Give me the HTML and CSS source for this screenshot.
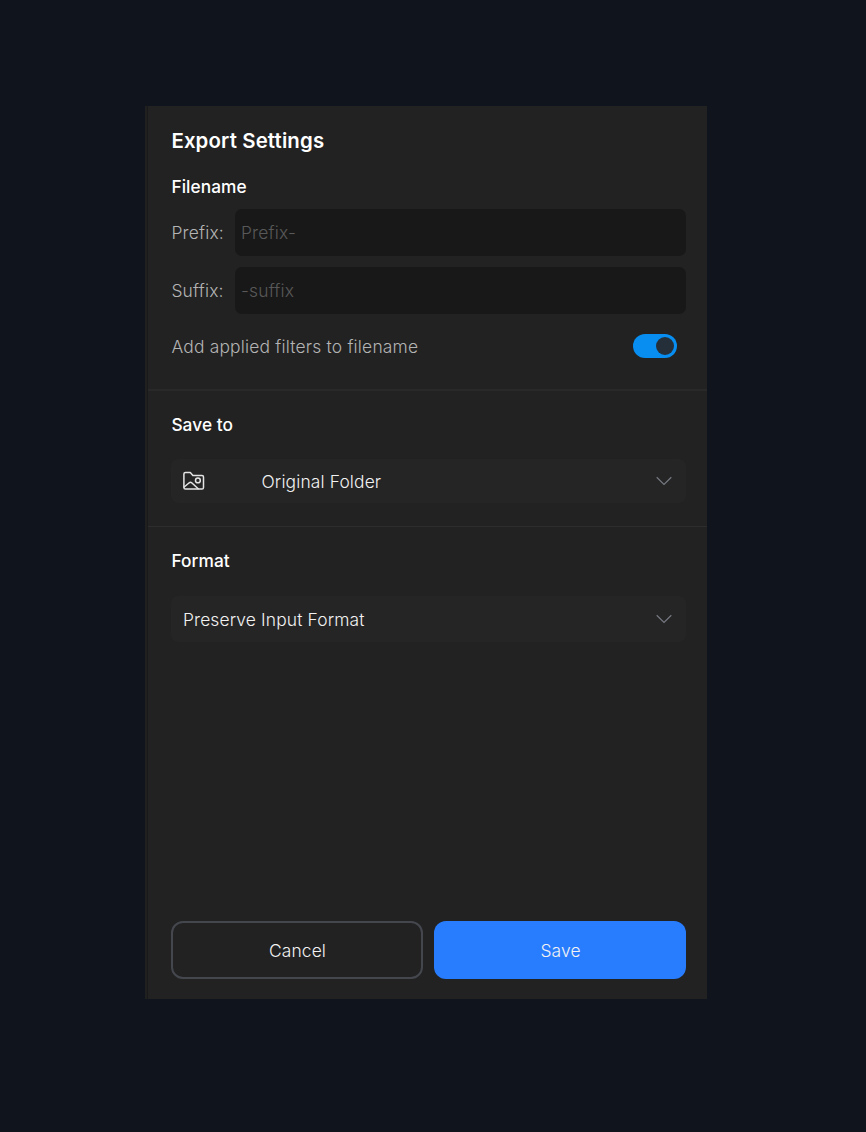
FILE: index.html
```html
<!DOCTYPE html>
<html lang="en">
<head>
<meta charset="utf-8">
<title>Export Settings</title>
<link rel="stylesheet" href="styles.css">
</head>
<body>
<main class="panel">
  <section class="section filename">
    <h1 class="title">Export Settings</h1>
    <h2 class="heading">Filename</h2>
    <div class="fields">
      <label class="field"><span class="label">Prefix:</span><input class="input" type="text" placeholder="Prefix-"></label>
      <label class="field"><span class="label">Suffix:</span><input class="input" type="text" placeholder="-suffix"></label>
    </div>
    <div class="option">
      <span class="option-text">Add applied filters to filename</span>
      <span class="toggle"><span class="knob"></span></span>
    </div>
  </section>
  <section class="section save-to">
    <h2 class="heading">Save to</h2>
    <div class="select folder">
      <svg class="folder-icon" width="22" height="20" viewBox="0 0 22 20" fill="none" stroke="currentColor" stroke-width="1.5" stroke-linejoin="round" stroke-linecap="round">
        <path d="M.9 16.4V3.1Q.9 1.5 2.5 1.5H7.3L9.9 4.4H19Q20.5 4.4 20.5 5.9V16.4Q20.5 18 19 18H2.5Q.9 18 .9 16.4Z"/>
        <path d="M1.2 16 6.2 11.8Q7.5 10.8 8.7 11.8L15.2 17.8"/>
        <circle cx="14.9" cy="9.4" r="2.4"/>
      </svg>
      <span class="value">Original Folder</span>
      <svg class="chevron" width="16" height="10" viewBox="0 0 16 10" fill="none" stroke="currentColor" stroke-width="1.2"><path d="M.7 1.2 8 8.4 15.3 1.2"/></svg>
    </div>
  </section>
  <section class="section format">
    <h2 class="heading">Format</h2>
    <div class="select preserve">
      <span class="value">Preserve Input Format</span>
      <svg class="chevron" width="16" height="10" viewBox="0 0 16 10" fill="none" stroke="currentColor" stroke-width="1.2"><path d="M.7 1.2 8 8.4 15.3 1.2"/></svg>
    </div>
  </section>
  <footer class="actions">
    <button class="button cancel">Cancel</button>
    <button class="button save">Save</button>
  </footer>
</main>
</body>
</html>
```
FILE: styles.css
```css
* { box-sizing: border-box; }
body {
  margin: 0;
  min-height: 1132px;
  padding: 106px 0 0 145px;
  background: #10151d;
  font: 360 17.4px/22px Inter, sans-serif;
  letter-spacing: .14px;
  color: #f2f2f2;
}
.panel {
  display: flex;
  flex-direction: column;
  width: 562px;
  height: 893px;
  padding-left: 3px;
  background: linear-gradient(90deg, #202020 2px, #191919 2px, #191919 3px, #222 3px);
}
.section { padding: 0 21px 0 23.4px; }
.filename { height: 283px; padding-top: 21px; }
.title, .heading { margin: 0; color: #fff; }
.title { font-size: 20.4px; line-height: 28px; font-weight: 600; letter-spacing: .14px; }
.heading { font-size: 17.3px; line-height: 22px; font-weight: 500; letter-spacing: .07px; }
.filename .heading { margin-top: 21px; }
.fields { display: grid; gap: 11px; margin-top: 11px; }
.field { display: flex; align-items: center; height: 47px; }
.label { width: 63.6px; padding-top: 1px; color: #b4b4b4; letter-spacing: .2px; }
.input {
  flex: 1;
  min-width: 0;
  height: 47px;
  padding: 0 6px;
  border: 0;
  border-radius: 7px;
  background: #181818;
  font: inherit;
  letter-spacing: .2px;
  color: #eee;
}
.input::placeholder { color: #585858; opacity: 1; }
.option { display: flex; align-items: center; justify-content: space-between; height: 24px; margin-top: 20px; padding-right: 9px; color: #b4b4b4; letter-spacing: .2px; }
.option-text { padding-top: 2px; }
.toggle { display: flex; align-items: center; justify-content: flex-end; width: 44px; height: 24px; padding-right: 3px; border-radius: 12px; background: #078ef0; }
.knob { width: 18px; height: 18px; border-radius: 50%; background: #252f3a; }
.save-to { height: 137px; padding-top: 23px; border-top: 2px solid #292929; }
.format { padding-top: 23px; border-top: 1px solid #2d2d2d; }
.select { display: flex; align-items: center; padding: 0 14px 0 11.6px; border-radius: 7px; background: #252525; }
.value { padding-top: 1px; }
.folder { height: 44px; margin-top: 23px; }
.folder .value { padding-top: 2px; }
.preserve { height: 46px; margin-top: 24px; }
.folder-icon { width: 22px; margin-right: 56.5px; color: #e4e4e4; }
.chevron { margin-left: auto; color: #757980; }
.actions { display: grid; grid-template-columns: 1fr 1fr; gap: 11px; margin-top: auto; padding: 0 21px 20px 23px; }
.button { height: 58px; padding: 1px 0 0 1px; border: 0; border-radius: 12px; font: inherit; letter-spacing: inherit; color: #f2f2f2; }
.cancel { border: 2px solid #44474e; background: transparent; }
.save { background: #287dff; }
```
